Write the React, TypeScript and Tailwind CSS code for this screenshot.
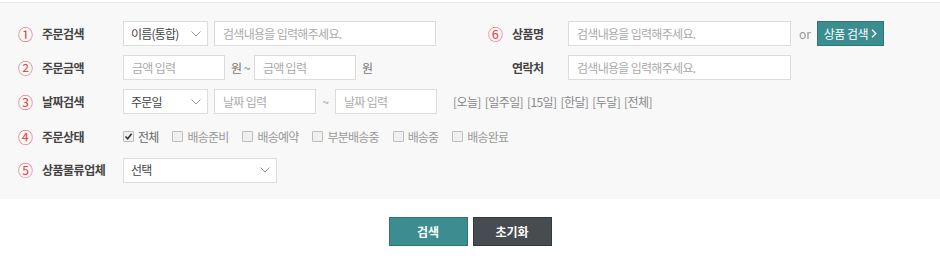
import React from "react";

const font = { fontFamily: '"Noto Sans CJK KR", "Noto Sans", sans-serif' };

function Chevron() {
  return (
    <svg width="10" height="6" viewBox="0 0 10 6" className="shrink-0">
      <path d="M0.5 0.5 L5 5 L9.5 0.5" fill="none" stroke="#999" strokeWidth="1" />
    </svg>
  );
}

function Select({ value, width }: { value: string; width: string }) {
  return (
    <div
      className={`${width} h-[25px] bg-white border border-[#dcdcdc] flex items-center justify-between pl-[7px] pr-[6px] text-[12px] tracking-[-0.8px] text-[#444]`}
    >
      <span>{value}</span>
      <Chevron />
    </div>
  );
}

function Input({ placeholder, width }: { placeholder: string; width: string }) {
  return (
    <div
      className={`${width} h-[25px] bg-white border border-[#dcdcdc] flex items-center pl-[8px] text-[12px] tracking-[-0.7px] text-[#aaa]`}
    >
      {placeholder}
    </div>
  );
}

function Num({ n }: { n?: string }) {
  return (
    <span className="w-[24px] shrink-0 text-[15px] text-[#e2474b] leading-none -mt-[1px]">{n}</span>
  );
}

function Label({ num, text }: { num?: string; text: string }) {
  return (
    <>
      <Num n={num} />
      <span className="w-[81px] shrink-0 text-[12px] font-bold text-[#444] tracking-[-0.5px]">{text}</span>
    </>
  );
}

function Check({ label, checked }: { label: string; checked?: boolean }) {
  return (
    <label className="flex items-center gap-[4px] mr-[14px] text-[12px] tracking-[-0.8px] text-[#999]">
      <span className="w-[11px] h-[11px] border border-[#bdbdbd] bg-[#f0f0f0] rounded-[1px] flex items-center justify-center">
        {checked && (
          <svg width="9" height="9" viewBox="0 0 9 9">
            <path d="M1.5 4.5 L3.7 6.8 L7.6 1.8" fill="none" stroke="#333" strokeWidth="1.6" />
          </svg>
        )}
      </span>
      <span className={checked ? "text-[#666]" : ""}>{label}</span>
    </label>
  );
}

export default function App() {
  const quick = ["[오늘]", "[일주일]", "[15일]", "[한달]", "[두달]", "[전체]"];
  const statuses = ["배송준비", "배송예약", "부분배송중", "배송중", "배송완료"];

  return (
    <div className="w-[940px] h-[271px] bg-white pt-[2px]" style={font}>
      {/* Search panel */}
      <div className="border-t border-[#e6e6e6] bg-[#f8f8f8] pt-[18px] pb-[16px] pl-[18px]">
        {/* Row 1 */}
        <div className="flex items-center h-[25px]">
          <div className="w-[470px] flex items-center">
            <Label num="①" text="주문검색" />
            <Select value="이름(통합)" width="w-[85px]" />
            <div className="w-[6px]" />
            <Input placeholder="검색내용을 입력해주세요." width="w-[222px]" />
          </div>
          <div className="flex items-center">
            <Num n="⑥" />
            <span className="w-[56px] text-[12px] font-bold text-[#444] tracking-[-0.5px]">상품명</span>
            <Input placeholder="검색내용을 입력해주세요." width="w-[223px]" />
            <span className="ml-[8px] mr-[6px] text-[12px] text-[#999]">or</span>
            <button className="w-[67px] h-[25px] bg-[#3c8d90] border border-[#2f7679] text-white text-[12px] tracking-[-0.5px] flex items-center justify-center gap-[3px]">
              상품 검색
              <svg width="6" height="9" viewBox="0 0 6 9">
                <path d="M1 0.8 L4.8 4.5 L1 8.2" fill="none" stroke="#fff" strokeWidth="1.3" />
              </svg>
            </button>
          </div>
        </div>

        {/* Row 2 */}
        <div className="flex items-center h-[25px] mt-[9px]">
          <div className="w-[470px] flex items-center text-[12px] text-[#777]">
            <Label num="②" text="주문금액" />
            <Input placeholder="금액 입력" width="w-[102px]" />
            <span className="ml-[6px] mr-[4px] tracking-[-0.5px]">원 ~</span>
            <Input placeholder="금액 입력" width="w-[102px]" />
            <span className="ml-[6px]">원</span>
          </div>
          <div className="flex items-center">
            <Num />
            <span className="w-[56px] text-[12px] font-bold text-[#444] tracking-[-0.5px]">연락처</span>
            <Input placeholder="검색내용을 입력해주세요." width="w-[223px]" />
          </div>
        </div>

        {/* Row 3 */}
        <div className="flex items-center h-[25px] mt-[9px]">
          <Label num="③" text="날짜검색" />
          <Select value="주문일" width="w-[85px]" />
          <div className="w-[6px]" />
          <Input placeholder="날짜 입력" width="w-[102px]" />
          <span className="w-[19px] text-center text-[12px] text-[#999]">~</span>
          <Input placeholder="날짜 입력" width="w-[102px]" />
          <div className="ml-[16px] flex gap-[4px] text-[12px] tracking-[-0.6px] text-[#888]">
            {quick.map((q) => (
              <span key={q}>{q}</span>
            ))}
          </div>
        </div>

        {/* Row 4 */}
        <div className="flex items-center h-[25px] mt-[10px]">
          <Label num="④" text="주문상태" />
          <Check label="전체" checked />
          {statuses.map((s) => (
            <Check key={s} label={s} />
          ))}
        </div>

        {/* Row 5 */}
        <div className="flex items-center h-[26px] mt-[8px]">
          <Label num="⑤" text="상품물류업체" />
          <Select value="선택" width="w-[154px]" />
        </div>
      </div>

      {/* Actions */}
      <div className="flex justify-center gap-[5px] mt-[18px]">
        <button className="w-[79px] h-[29px] bg-[#3c8d90] border border-[#2e7578] text-white text-[12px] font-bold">
          검색
        </button>
        <button className="w-[79px] h-[29px] bg-[#474c50] border border-[#35393c] text-white text-[12px] font-bold">
          초기화
        </button>
      </div>
    </div>
  );
}
